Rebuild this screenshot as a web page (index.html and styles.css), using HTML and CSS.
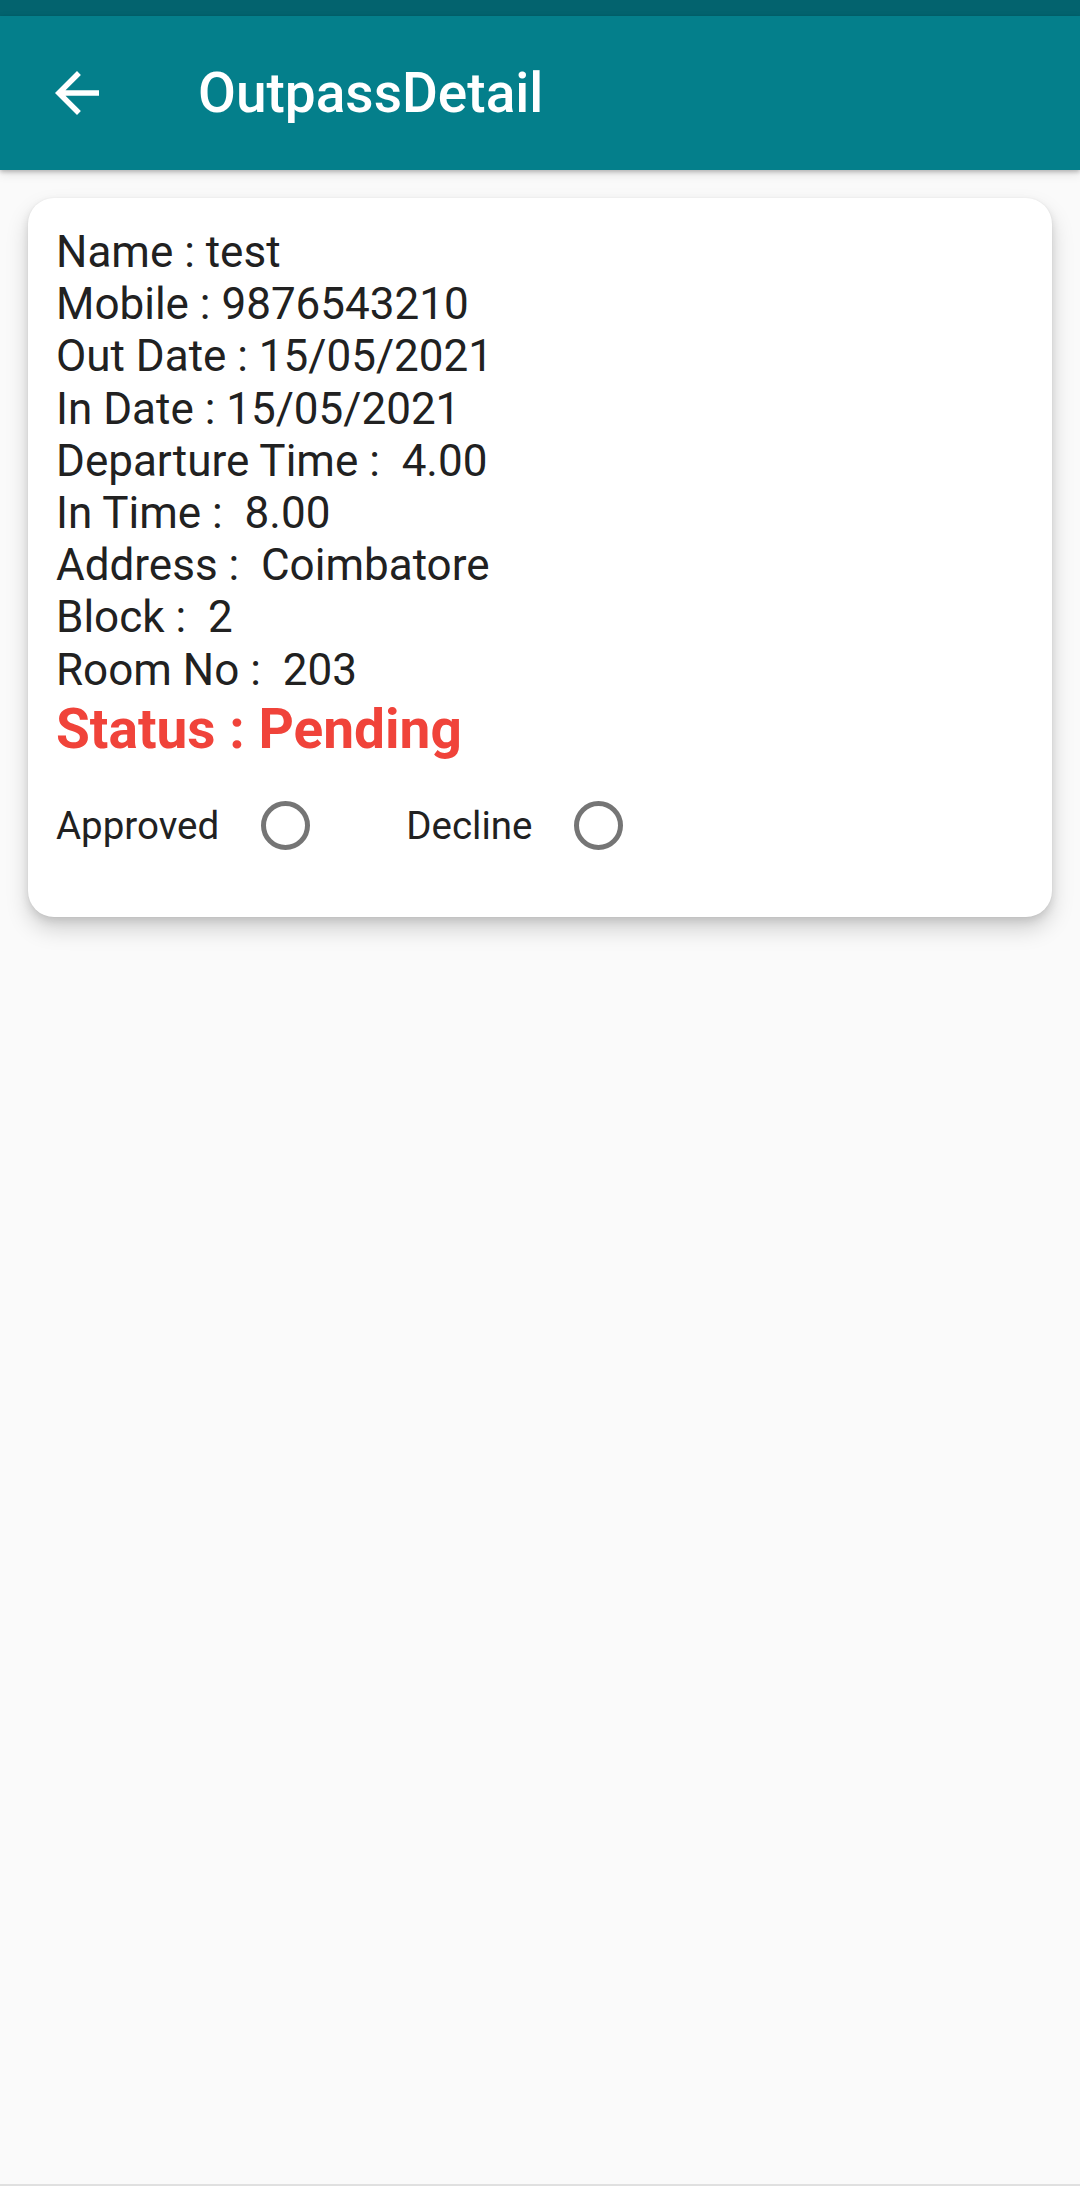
FILE: index.html
```html
<!DOCTYPE html>
<html lang="en">
<head>
<meta charset="utf-8">
<title>OutpassDetail</title>
<link rel="stylesheet" href="styles.css">
</head>
<body>
<div class="status-bar"></div>
<header class="app-bar">
  <svg class="back" viewBox="0 0 24 24" width="66" height="66" aria-hidden="true">
    <path d="M20 11H7.83l5.59-5.59L12 4l-8 8 8 8 1.41-1.41L7.83 13H20v-2z" fill="#ffffff"/>
  </svg>
  <h1 class="title">OutpassDetail</h1>
</header>
<main class="content">
  <section class="card">
    <div class="line">Name : test</div>
    <div class="line">Mobile : 9876543210</div>
    <div class="line">Out Date : 15/05/2021</div>
    <div class="line">In Date : 15/05/2021</div>
    <div class="line">Departure Time :&nbsp; 4.00</div>
    <div class="line">In Time :&nbsp; 8.00</div>
    <div class="line">Address :&nbsp; Coimbatore</div>
    <div class="line">Block :&nbsp; 2</div>
    <div class="line">Room No :&nbsp; 203</div>
    <div class="status">Status : Pending</div>
    <div class="choices">
      <span class="choice-label">Approved</span>
      <span class="radio-box"><span class="radio"></span></span>
      <span class="spacer"></span>
      <span class="choice-label">Decline</span>
      <span class="radio-box"><span class="radio"></span></span>
    </div>
  </section>
</main>
<div class="nav-edge"></div>
</body>
</html>
```

FILE: styles.css
```css
html, body {
  margin: 0;
  padding: 0;
}

body {
  background: #fafafa;
  font-family: Roboto, "Noto Sans", "Liberation Sans", sans-serif;
  height: 100vh;
  display: flex;
  flex-direction: column;
  overflow: hidden;
}

.status-bar {
  height: 16px;
  background: #03636e;
  flex: none;
}

.app-bar {
  height: 154px;
  background: #047f8b;
  display: flex;
  align-items: center;
  flex: none;
  box-shadow: 0 2px 4px rgba(0, 0, 0, 0.22), 0 4px 10px rgba(0, 0, 0, 0.10);
  position: relative;
  z-index: 1;
}

.back {
  margin-left: 44px;
  display: block;
  flex: none;
}

.title {
  margin: 0 0 0 88px;
  color: #ffffff;
  font-size: 55px;
  font-weight: 500;
  line-height: 64px;
}

.content {
  flex: 1;
  padding: 28px;
}

.card {
  background: #ffffff;
  border-radius: 26px;
  padding: 28px 28px 25px 28px;
  box-shadow: 0 12px 22px rgba(0, 0, 0, 0.17), 0 4px 8px rgba(0, 0, 0, 0.10), 0 0 2px rgba(0, 0, 0, 0.06);
}

.line {
  font-size: 44px;
  line-height: 52.2px;
  color: #212121;
  white-space: pre;
}

.status {
  font-size: 55px;
  font-weight: 700;
  line-height: 64px;
  padding-top: 1px;
  margin-bottom: -1px;
  color: #f0433a;
}

.choices {
  display: flex;
  align-items: center;
  height: 132px;
}

.choice-label {
  font-size: 38.5px;
  color: #212121;
}

.radio-box {
  width: 132px;
  height: 132px;
  display: flex;
  align-items: center;
  justify-content: center;
}

.radio {
  width: 49px;
  height: 49px;
  box-sizing: border-box;
  border: 5.5px solid #757575;
  border-radius: 50%;
}

.spacer {
  width: 55px;
}

.nav-edge {
  height: 7px;
  flex: none;
  background: #ffffff;
  border-top: 2px solid #e0e0e0;
  box-sizing: border-box;
}
```
